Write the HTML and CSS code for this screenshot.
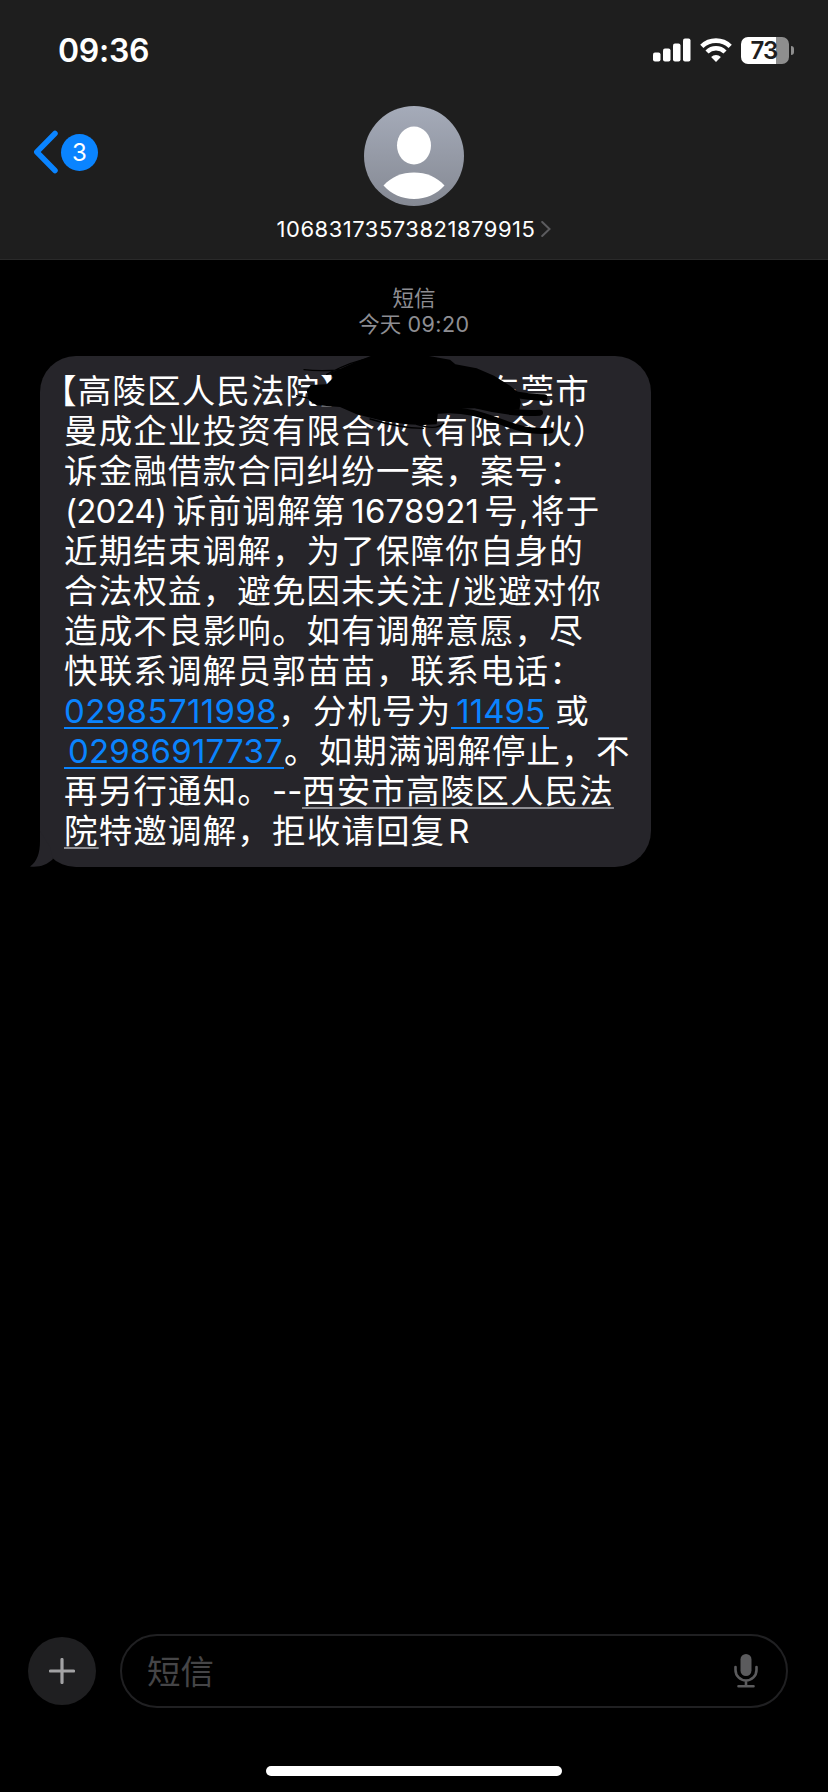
FILE: index.html
```html
<!DOCTYPE html>
<html lang="zh-CN">
<head>
    <meta charset="UTF-8">
    <meta name="viewport" content="width=device-width, initial-scale=1.0">
    <title>短信</title>
    <link rel="stylesheet" href="styles.css">
</head>
<body>
    <div class="phone">
        <header class="header">
            <div class="status-bar">
                <span class="time">09:36</span>
                <div class="status-icons">
                    <svg class="signal" viewBox="0 0 38 24" fill="#fff">
                        <rect x="0" y="14.5" width="7.5" height="9" rx="2"/>
                        <rect x="10" y="10.5" width="7.5" height="13" rx="2"/>
                        <rect x="20" y="5.5" width="7.5" height="18" rx="2"/>
                        <rect x="30" y="0.5" width="7.5" height="23" rx="2"/>
                    </svg>
                    <svg class="wifi" viewBox="0 0 32 24" fill="none" stroke="#fff">
                        <path d="M1.8 8.4a20.4 20.4 0 0 1 28.4 0" stroke-width="4.6"/>
                        <path d="M7 14a12.8 12.8 0 0 1 18 0" stroke-width="4.4"/>
                        <path d="M16 24l-4.9-5a7 7 0 0 1 9.8 0z" fill="#fff" stroke="none"/>
                    </svg>
                    <div class="battery"><span class="battery-level">73</span></div>
                    <span class="battery-cap"></span>
                </div>
            </div>
            <div class="contact-bar">
                <a class="back">
                    <svg class="chevron" viewBox="0 0 26 44"><path d="M22 3.5L3.8 22 22 40.5"/></svg>
                    <span class="badge">3</span>
                </a>
                <div class="contact">
                    <svg class="avatar" viewBox="0 0 100 100">
                        <defs>
                            <linearGradient id="avatarBg" x1="0" y1="0" x2="0" y2="1">
                                <stop offset="0" stop-color="#a5abb9"/>
                                <stop offset="1" stop-color="#858993"/>
                            </linearGradient>
                        </defs>
                        <circle cx="50" cy="50" r="50" fill="url(#avatarBg)"/>
                        <ellipse cx="50" cy="39.5" rx="17" ry="19" fill="#fff"/>
                        <path d="M19.5 79.5C27 71 38 66.5 50 66.5S73 71 80.5 79.5C73 88 62 93 50 93S27 88 19.5 79.5z" fill="#fff"/>
                    </svg>
                    <div class="contact-name">
                        <span>10683173573821879915</span>
                        <svg viewBox="0 0 10 16"><path d="M1.2 1L8.5 8 1.2 15"/></svg>
                    </div>
                </div>
            </div>
        </header>

        <main class="thread">
            <div class="stamp">
                <div>短信</div>
                <div>今天 <span class="clock">09:20</span></div>
            </div>

            <div class="bubble">
                <p class="first">【高陵区人民法院】<span class="gap"></span>东莞市</p>
                <p>曼成企业投资有限合伙<span class="paren">（</span>有限合伙）</p>
                <p>诉金融借款合同纠纷一案，案号：</p>
                <p><span class="num year">(2024)</span>诉前调解第<span class="num case">1678921</span>号<span class="num comma">,</span>将于</p>
                <p>近期结束调解，为了保障你自身的</p>
                <p>合法权益，避免因未关注<span class="num slash">/</span>逃避对你</p>
                <p>造成不良影响。如有调解意愿，尽</p>
                <p>快联系调解员郭苗苗，联系电话：</p>
                <p><a class="num phone-a">02985711998</a>，分机号为<a class="num ext">11495</a><span class="or">或</span></p>
                <p><a class="num phone-b">02986917737</a>。如期满调解停止，不</p>
                <p>再另行通知。<span class="num dashes">--</span><u>西安市高陵区人民法</u></p>
                <p><u>院</u>特邀调解，拒收请回复<span class="num reply">R</span></p>

                <svg class="scribble" viewBox="0 0 840 300">
                    <path d="M50 135L62 120 110 118 130 98 120 84 150 72 195 52 240 34 290 22 400 30 480 44 496 58 560 70 612 92 660 122 684 142 692 172 688 194 640 192 560 190 445 192 440 238 400 240 350 238 280 228 200 208 150 186 80 181 56 166z"/>
                    <g class="strokes">
                        <path d="M660 146Q720 156 762 158" stroke-width="20"/>
                        <path d="M560 182Q660 208 750 203" stroke-width="18"/>
                        <path d="M445 197C570 185 640 246 720 256Q760 260 782 256" stroke-width="18"/>
                        <path d="M42 74Q90 80 160 74M110 88Q190 46 250 38M20 152L80 165M240 222Q330 250 400 250M380 238Q440 258 462 234" stroke-width="4"/>
                    </g>
                </svg>
                <svg class="tail" viewBox="0 0 48 44"><path d="M10 8V18C10 30 7 39 0 43.5C9 44.5 17 42 23 36L20 24z"/></svg>
            </div>
        </main>

        <footer class="composer">
            <div class="compose-row">
                <button class="plus">
                    <svg viewBox="0 0 26 26"><path d="M13 1.5v23M1.5 13h23"/></svg>
                </button>
                <div class="field">
                    <span class="placeholder">短信</span>
                    <svg class="mic" viewBox="0 0 24 34">
                        <rect x="6.5" y="0" width="11" height="22" rx="5.5"/>
                        <path d="M1.5 13v3a10.5 10.5 0 0 0 21 0v-3M12 27v5M4.5 32.2h15"/>
                    </svg>
                </div>
            </div>
            <div class="home-bar"></div>
        </footer>
    </div>
</body>
</html>
```
FILE: styles.css
```css
:root {
    --blue: #0a84ff;
    --bar: #1e1e1e;
    --bubble: #26252a;
}

* {
    margin: 0;
    padding: 0;
    box-sizing: border-box;
}

body {
    background: #000;
    color: #fff;
    font-family: Inter, 'Noto Sans CJK SC', sans-serif;
}

.phone {
    width: 828px;
    height: 1792px;
    display: flex;
    flex-direction: column;
    overflow: hidden;
}

.header {
    height: 260px;
    background: var(--bar);
    border-bottom: 1px solid #2a2a2a;
}

.status-bar {
    height: 100px;
    padding: 0 34px 0 58px;
    display: flex;
    justify-content: space-between;
    align-items: center;
}

.time {
    font-size: 32px;
    font-weight: 600;
    letter-spacing: -0.3px;
}

.status-icons {
    display: flex;
    align-items: center;
}

.signal {
    width: 38px;
    height: 24px;
    margin-right: 9px;
}

.wifi {
    width: 32px;
    height: 24px;
    margin-right: 9px;
}

.battery {
    width: 48px;
    height: 27px;
    border-radius: 7px;
    background: linear-gradient(90deg, #fff 73%, #8e8e8e 73%);
}

.battery-level {
    display: block;
    padding-right: 2px;
    text-align: center;
    font-size: 24px;
    line-height: 27px;
    font-weight: 600;
    letter-spacing: -0.8px;
    color: var(--bar);
}

.battery-cap {
    width: 3px;
    height: 9px;
    margin-left: 2px;
    border-radius: 0 4px 4px 0;
    background: #8e8e8e;
}

.contact-bar {
    display: grid;
    grid-template-columns: 1fr auto 1fr;
    padding: 6px 33px 0;
}

.back {
    display: flex;
    align-items: center;
    height: 92px;
}

.chevron {
    width: 26px;
    height: 44px;
    margin-right: 2px;
    fill: none;
    stroke: var(--blue);
    stroke-width: 5.5;
    stroke-linecap: round;
    stroke-linejoin: round;
}

.badge {
    width: 37px;
    height: 37px;
    border-radius: 50%;
    background: var(--blue);
    text-align: center;
    font-size: 24px;
    line-height: 37px;
}

.contact {
    display: flex;
    flex-direction: column;
    align-items: center;
}

.avatar {
    width: 100px;
    height: 100px;
}

.contact-name {
    display: flex;
    align-items: center;
    gap: 6px;
    height: 46px;
    font-size: 22px;
    letter-spacing: 0.5px;
}

.contact-name svg {
    width: 10px;
    height: 16px;
    fill: none;
    stroke: #5c5c5f;
    stroke-width: 2;
    stroke-linecap: round;
}

.thread {
    flex: 1;
    padding: 25px 40px 0;
}

.stamp {
    height: 71px;
    text-align: center;
    font-size: 21.5px;
    line-height: 26px;
    color: #8e8e93;
}

.clock {
    letter-spacing: 0.5px;
}

.bubble {
    position: relative;
    width: 611px;
    height: 511px;
    padding: 13px 0 0 24px;
    border-radius: 36px;
    background: var(--bubble);
    font-size: 33.5px;
    letter-spacing: 1.16px;
    line-height: 40px;
    white-space: nowrap;
    text-spacing-trim: space-all;
    font-family: 'Noto Sans CJK SC', sans-serif;
}

.bubble p {
    height: 40px;
}

.first {
    margin-left: -21px;
}

.num {
    display: inline-block;
    font-family: Inter, sans-serif;
    font-size: 33px;
    letter-spacing: 0;
}

.gap {
    display: inline-block;
    width: 131px;
}

.paren {
    margin-left: -11px;
}

.bubble .year {
    width: 109px;
    padding-left: 1px;
    letter-spacing: -0.8px;
}

.bubble .case {
    width: 138px;
    padding-left: 5px;
    letter-spacing: 0.2px;
}

.comma {
    width: 12px;
}

.slash {
    width: 18px;
    padding-left: 3px;
}

.bubble a {
    height: 40px;
    line-height: 44px;
    vertical-align: top;
    color: var(--blue);
    border-bottom: 2px solid var(--blue);
}

.bubble .phone-a {
    width: 214px;
    letter-spacing: 0.4px;
}

.bubble .phone-b {
    width: 220px;
    padding-left: 4px;
    letter-spacing: 0.2px;
}

.ext {
    width: 98px;
    padding-left: 5px;
}

.or {
    margin-left: 6px;
}

.dashes {
    width: 30px;
}

.reply {
    padding-left: 3px;
}

.bubble u {
    text-decoration: underline 2px #8e8e93;
    text-underline-offset: 4px;
    text-decoration-skip-ink: none;
}

/* marker scrawl over the recipient's name */
.scribble {
    position: absolute;
    left: 250px;
    top: -11px;
    width: 280px;
    height: 100px;
}

.strokes {
    fill: none;
    stroke: #000;
    stroke-linecap: round;
}

.tail {
    position: absolute;
    left: -10px;
    bottom: 0;
    width: 48px;
    height: 44px;
    fill: var(--bubble);
}

.composer {
    height: 158px;
    padding-left: 28px;
}

.compose-row {
    display: flex;
    align-items: center;
    gap: 24px;
    height: 74px;
}

.plus {
    width: 68px;
    height: 68px;
    border: none;
    border-radius: 50%;
    background: #1f1f21;
}

.plus svg {
    display: block;
    width: 26px;
    height: 26px;
    margin: auto;
    fill: none;
    stroke: #a2a2a4;
    stroke-width: 3.2;
    stroke-linecap: round;
}

.field {
    width: 668px;
    height: 74px;
    padding: 0 28px 0 25px;
    display: flex;
    align-items: center;
    justify-content: space-between;
    border: 2px solid #202022;
    border-radius: 37px;
    font-size: 33.5px;
    color: #454547;
}

.placeholder {
    padding-bottom: 4px;
}

.mic {
    width: 24px;
    height: 34px;
    fill: #5b5b5d;
}

.mic path {
    fill: none;
    stroke: #5b5b5d;
    stroke-width: 2.6;
    stroke-linecap: round;
}

.home-bar {
    width: 296px;
    height: 10px;
    margin: 58px 0 0 238px;
    border-radius: 5px;
    background: #fff;
}
```
